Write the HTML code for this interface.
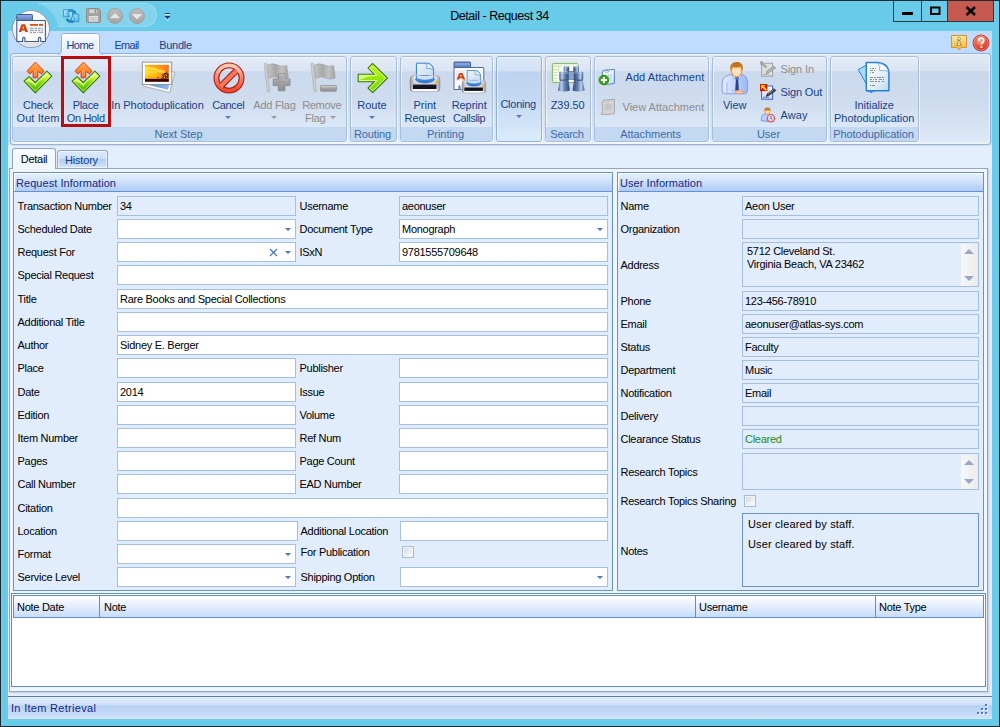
<!DOCTYPE html>
<html><head><meta charset="utf-8"><title>Detail - Request 34</title>
<style>
*{box-sizing:border-box;margin:0;padding:0}
html,body{width:1000px;height:727px;overflow:hidden}
body{background:#68cbe9;font-family:"Liberation Sans",sans-serif;font-size:11px;letter-spacing:-0.28px;color:#000;position:relative}
body div,body svg,body i{position:absolute}
#frame{left:0;top:0;width:1000px;height:727px;border-right:1px solid #1f2a30;border-left:1px solid #1f2a30;border-top:1px solid #1f2a30;border-bottom:1px solid #1f2a30}
#title{left:0;top:8px;width:999px;text-align:center;font-size:12.5px;line-height:16px;letter-spacing:-0.45px;color:#000}
#client{left:8px;top:31px;width:984px;height:688px;background:linear-gradient(#bfdbff,#bfdbff 114px,#e3eefc 114px)}
#capbtn{left:893px;top:1px;width:101px;height:21px;border:1px solid #2b3a42;border-top:none;background:#68cbe9}
#capbtn div{top:0;height:20px}
.rtab{top:34px;height:22px;line-height:23px;text-align:center;color:#15428b;font-size:11px}
.rtab.sel{line-height:21px;background:linear-gradient(#f4f8fe,#e3ecf8 60%,#dbe6f4);border:1px solid #8db2e3;border-bottom:none;border-radius:4px 4px 0 0;box-shadow:inset 1px 1px 0 #fff}
#rpanel{left:10px;top:53px;width:981px;height:92px;border:1px solid #8db2e3;border-bottom-color:#9cb2d0;border-radius:4px;background:linear-gradient(#e1e9f5,#d8e2f1 18.5%,#c8d7eb 19%,#ccdaee 50%,#dbe7f6 92%,#e4eefa);box-shadow:inset 0 0 0 1px #eef6fd,0 1px 0 #cfdcf0}
.grp{top:56px;height:86px;border:1px solid #a6bedc;border-radius:3px;background:linear-gradient(#e4ebf6,#dae4f2 17%,#cbd9ec 17.5%,#cfddef 55%,#dce8f7 83%);box-shadow:inset 1px 1px 0 rgba(255,255,255,.55), 1px 1px 0 rgba(255,255,255,.7)}
.grp .cap{left:0;right:0;bottom:0;height:14px;background:#c2d9f1;color:#3e6aaa;text-align:center;line-height:15px;font-size:11px;border-radius:0 0 2px 2px;white-space:nowrap;letter-spacing:-.04px;padding-right:2px}
.lb{color:#15428b;text-align:center;white-space:nowrap;line-height:13px;margin-top:1px}
.lb.dis{color:#8d8d8d}
.dd{width:0;height:0;border-left:3px solid transparent;border-right:3px solid transparent;border-top:3px solid #567db1}
.dd.dis{border-top-color:#9a9a9a}
/* page */
.ptab{text-align:center;white-space:nowrap}
#tabpage{left:9px;top:168px;width:979px;height:524px;border:1px solid #8fa6c8;background:#f1f6fe;box-shadow:1px 1px 0 #c8d4e8,2px 2px 0 #dbe4f2,3px 3px 0 #e4ecf8}
.panel{border:1px solid #6593cf;background:#e1ecfc}
.panel .ph{left:0;top:0;right:0;height:19px;line-height:20px;padding-left:2px;letter-spacing:.05px;color:#15288a;background:linear-gradient(#e6f0fe,#d2e3fb 45%,#bdd4f7 75%,#b0cbf4);border-bottom:1px solid #6593cf;box-shadow:inset 1px 1px 0 #fff}
.lbl{white-space:nowrap;color:#000;margin-left:-.5px}
.fld{border:1px solid #a3bfe3;background:#fff;line-height:18px;padding-left:2px;white-space:nowrap;overflow:hidden}
.fld.ro{background:#e1ecfc}
.cdd{right:4px;top:8px;width:0;height:0;border-left:3px solid transparent;border-right:3px solid transparent;border-top:3px solid #4d79b5}
.cx{right:17px;top:5px}
.chk{width:12px;height:12px;border:1px solid #a9bcd9;background:linear-gradient(135deg,#d2d5da,#f7f7f8 80%);box-shadow:inset 0 0 0 1px #f1f3f6}
.memo .mt{left:4px;top:2px;line-height:13px}
.sb{right:1px;top:1px;bottom:0;width:16px;background:linear-gradient(90deg,#f7f7f7,#ececec)}
.sb .up{left:3px;top:5px;border-left:5px solid transparent;border-right:5px solid transparent;border-bottom:5px solid #9aa7c6;width:0;height:0}
.sb .dn{left:3px;bottom:5px;border-left:5px solid transparent;border-right:5px solid transparent;border-top:5px solid #9aa7c6;width:0;height:0}
.notes{border-color:#6d94cf}
#grid{left:11px;top:593px;width:975px;height:94px;border:1px solid #5f8bd0;background:#fff}
#gridin{left:1px;top:1px;right:1px;height:23px;border:1px solid #5f8bd0;background:linear-gradient(#ffffff,#e6effd 45%,#c8dcfa)}
.gh{top:0;height:21px;line-height:22px;padding-left:3px;border-right:1px solid #5f8bd0}
#status{left:8px;top:696px;width:984px;height:23px;border-top:1px solid #567db1;background:linear-gradient(#e3eefc,#d0e0f8 35%,#b7d0f3 40%,#c6daf6 80%,#d9e7fa);color:#15288a;letter-spacing:.3px;line-height:23px;padding-left:3px}
</style></head><body>
<div id="frame"></div>
<div id="title">Detail - Request 34</div>
<div id="capbtn">
 <div style="left:27px;width:1px;background:#2b3a42"></div>
 <div style="left:53px;width:46px;background:#c75a50;border-left:1px solid #2b3a42"></div>
</div>
<div id="client"></div>
<div id="rpanel"></div>
<svg style="left:56px;top:31px" width="50" height="25" viewBox="0 0 50 25">
 <defs><linearGradient id="ht" x1="0" y1="0" x2="0" y2="1"><stop offset="0" stop-color="#ffffff"/><stop offset=".35" stop-color="#eef4fc"/><stop offset="1" stop-color="#e1eaf6"/></linearGradient></defs>
 <path d="M2 23.5 Q5.5 23 5.5 19 V5 Q5.5 2.5 8 2.5 H41 Q43.5 2.5 43.5 5 V19 Q43.5 23 47 23.5 V25 H2 Z" fill="url(#ht)"/>
 <path d="M2 23.5 Q5.5 23 5.5 19 V5 Q5.5 2.5 8 2.5 H41 Q43.5 2.5 43.5 5 V19 Q43.5 23 47 23.5" fill="none" stroke="#8db2e3" stroke-width="1"/>
 <path d="M6.5 20 V5.5 Q6.5 3.5 8.5 3.5 H40.5 Q42.5 3.5 42.5 5.5 V20" fill="none" stroke="#ffffff" stroke-width="1" opacity=".9"/>
</svg>
<div class="rtab" style="left:50px;width:60px;letter-spacing:-.59px">Home</div>
<div class="rtab" style="left:96.5px;width:60px;letter-spacing:-.66px">Email</div>
<div class="rtab" style="left:145.5px;width:60px;letter-spacing:-.3px">Bundle</div>
<div class="grp" style="left:12px;width:335px"><div class="cap">Next Step</div></div>
<div class="grp" style="left:350px;width:47px"><div class="cap" style="letter-spacing:-.1px">Routing</div></div>
<div class="grp" style="left:400px;width:93px"><div class="cap">Printing</div></div>
<div class="grp" style="left:496px;width:46px;border-color:#8fb1d4;background:linear-gradient(#dbe8f7,#d2e2f5 17%,#bdd3ef 17.5%,#c5daf3 55%,#d9ebfb 96%)"></div>
<div class="grp" style="left:545px;width:46px"><div class="cap" style="letter-spacing:-.26px">Search</div></div>
<div class="grp" style="left:594px;width:115px"><div class="cap">Attachments</div></div>
<div class="grp" style="left:712px;width:115px"><div class="cap">User</div></div>
<div class="grp" style="left:830px;width:89px"><div class="cap">Photoduplication</div></div>
<!--RIBBONITEMS-->
<div class="lb" style="left:-22.0px;top:98px;width:120px"><span style="letter-spacing:-0.28px">Check</span><br><span style="letter-spacing:0.1px">Out Item</span></div>
<div class="lb" style="left:25.700000000000003px;top:98px;width:120px"><span style="letter-spacing:-0.31px">Place</span><br><span style="letter-spacing:-0.34px">On Hold</span></div>
<div class="lb" style="left:97.5px;top:98px;width:120px"><span style="letter-spacing:-0.06px">In Photoduplication</span></div>
<div class="lb" style="left:168.3px;top:98px;width:120px"><span style="letter-spacing:-0.33px">Cancel</span></div>
<i class="dd" style="left:225px;top:116px"></i>
<div class="lb dis" style="left:214.5px;top:98px;width:120px"><span style="letter-spacing:-0.22px">Add Flag</span></div>
<i class="dd dis" style="left:271px;top:116px"></i>
<div class="lb dis" style="left:261.7px;top:98px;width:120px"><span style="letter-spacing:-0.33px">Remove</span></div>
<div class="lb dis" style="left:305px;top:111px;text-align:left"><span style="letter-spacing:-0.23px">Flag</span></div>
<i class="dd dis" style="left:329.5px;top:116px"></i>
<div class="lb" style="left:312.0px;top:98px;width:120px"><span style="letter-spacing:0.03px">Route</span></div>
<i class="dd" style="left:369px;top:116px"></i>
<div class="lb" style="left:364.8px;top:98px;width:120px"><span style="letter-spacing:0.03px">Print</span><br><span style="letter-spacing:-0.07px">Request</span></div>
<div class="lb" style="left:409.2px;top:98px;width:120px"><span style="letter-spacing:-0.07px">Reprint</span><br><span style="letter-spacing:-0.4px">Callslip</span></div>
<div class="lb" style="left:458.20000000000005px;top:97px;width:120px"><span style="letter-spacing:-0.26px">Cloning</span></div>
<i class="dd" style="left:515.5px;top:115px"></i>
<div class="lb" style="left:507.70000000000005px;top:98px;width:120px"><span style="letter-spacing:-0.04px">Z39.50</span></div>
<div class="lb" style="left:625.5px;top:70px;text-align:left"><span style="letter-spacing:0.08px">Add Attachment</span></div>
<div class="lb dis" style="left:622.5px;top:100px;text-align:left"><span style="letter-spacing:0.0px">View Attachment</span></div>
<div class="lb" style="left:674.7px;top:98px;width:120px"><span style="letter-spacing:-0.11px">View</span></div>
<div class="lb dis" style="left:780.5px;top:62px;text-align:left"><span style="letter-spacing:-0.11px">Sign In</span></div>
<div class="lb" style="left:780.5px;top:85px;text-align:left"><span style="letter-spacing:-0.15px">Sign Out</span></div>
<div class="lb" style="left:780.5px;top:108px;text-align:left"><span style="letter-spacing:0.07px">Away</span></div>
<div class="lb" style="left:814.2px;top:98px;width:120px"><span style="letter-spacing:-0.04px">Initialize</span><br><span style="letter-spacing:-0.07px">Photoduplication</span></div>
<div id="hl" style="left:61px;top:56px;width:50px;height:71px;border:3px solid #b70f0f"></div>
<!-- QAT background -->
<div style="left:38px;top:3px;width:119px;height:24px;border-radius:0 12px 12px 0;background:rgba(255,255,255,.19);border:1px solid rgba(255,255,255,.15);border-left:none"></div>
<div style="left:1px;top:1px;width:70px;height:30px;overflow:hidden"><div style="left:3.5px;top:1.5px;width:53px;height:53px;border-radius:50%;background:#68cbe9"></div></div>
<!-- orb -->
<svg style="left:11px;top:9px" width="40" height="40" viewBox="0 0 40 40">
 <defs>
  <radialGradient id="og" cx="50%" cy="35%" r="65%"><stop offset="0" stop-color="#ffffff"/><stop offset=".7" stop-color="#f1f3f7"/><stop offset="1" stop-color="#c9d0dc"/></radialGradient>
  <linearGradient id="tb" x1="0" y1="0" x2="0" y2="1"><stop offset="0" stop-color="#8fb0ea"/><stop offset="1" stop-color="#5f7fbd"/></linearGradient>
 </defs>
 <circle cx="20" cy="20" r="18.5" fill="url(#og)" stroke="#8b9ab3" stroke-width="1"/>
 <circle cx="20" cy="20" r="17.3" fill="none" stroke="#ffffff" stroke-opacity=".8" stroke-width="1"/>
 <path d="M5.8 11.5 V6.3 Q5.8 5.5 6.6 5.5 H20.6 Q21.4 5.5 21.4 6.3 V11.5 Z" fill="url(#tb)" stroke="#3d5a8c" stroke-width="1"/>
 <path d="M5.8 11.5 H33.6 Q34.4 11.5 34.4 12.3 V32.5 H29.8 V29.6 Q29.8 28.4 28.6 28.4 Q27.4 28.4 27.4 29.6 V32.5 H14 V29.6 Q14 28.4 12.8 28.4 Q11.6 28.4 11.6 29.6 V32.5 H5.8 Z" fill="#fdfdfe" stroke="#3d5a8c" stroke-width="1.1" stroke-linejoin="round"/>
 <rect x="7" y="13" width="26" height="12" fill="#f0f2f6" opacity=".8"/>
 <path d="M7.7 23 L10.6 15.2 H14 L17 23 H14.3 L13.8 21.4 H10.8 L10.3 23 Z M11.4 19.6 H13.2 L12.3 16.9 Z" fill="#d2460a"/>
 <rect x="19" y="15" width="8" height="1.8" fill="#dc5210"/><rect x="28" y="15" width="4" height="1.8" fill="#dc5210"/>
 <g fill="#9aa3b4"><rect x="19" y="18.8" width="3" height="1.2"/><rect x="23" y="18.8" width="3" height="1.2"/><rect x="27" y="18.8" width="3" height="1.2"/><rect x="31" y="18.8" width="1" height="1.2"/>
 <rect x="19" y="20.8" width="4" height="1.2"/><rect x="24" y="20.8" width="2" height="1.2"/><rect x="27" y="20.8" width="2" height="1.2"/><rect x="30" y="20.8" width="2" height="1.2"/>
 <rect x="19" y="22.8" width="2" height="1.2"/><rect x="22" y="22.8" width="3" height="1.2"/><rect x="26" y="22.8" width="1" height="1.2"/><rect x="28" y="22.8" width="4" height="1.2"/></g>
</svg>
<!-- refresh -->
<svg style="left:62px;top:7px" width="18" height="18" viewBox="0 0 18 18">
 <defs><linearGradient id="rf" x1="0" y1="0" x2="1" y2="1"><stop offset="0" stop-color="#c6f0fc"/><stop offset="1" stop-color="#4aaee6"/></linearGradient></defs>
 <path d="M5.2 4.6 A5.6 5.6 0 0 1 13.6 6.4" fill="none" stroke="#1a80b8" stroke-width="2.4"/>
 <path d="M12.8 13.6 A5.6 5.6 0 0 1 4.6 11.8" fill="none" stroke="#1a80b8" stroke-width="2.4"/>
 <path d="M8.4 2.6 Q12 3.4 10.2 8 Q8.4 12 9.4 15.6" fill="none" stroke="#2a94d0" stroke-width="1.6"/>
 <path d="M1.4 2.8 H7.4 L5.6 5.4 L7.6 9.8 H1.4 Z" fill="url(#rf)" stroke="#2a94d0" stroke-width=".9" stroke-linejoin="round"/>
 <path d="M16.8 14.6 H11.2 L12.8 12 L10.6 7.2 H16.8 Z" fill="url(#rf)" stroke="#2a94d0" stroke-width=".9" stroke-linejoin="round"/>
 <path d="M9 5 Q9.8 8 8.8 11.4" fill="none" stroke="#d8f4ff" stroke-width=".8"/>
</svg>
<!-- save -->
<svg style="left:86px;top:8px" width="15" height="15" viewBox="0 0 15 15">
 <path d="M.5 1.5 Q.5 .5 1.5 .5 H12.5 L14.5 2.5 V13.5 Q14.5 14.5 13.5 14.5 H1.5 Q.5 14.5 .5 13.5 Z" fill="#a6a6a6" stroke="#8a8a8a"/>
 <rect x="3" y="1" width="8.5" height="4.5" fill="#d8d8d8" stroke="#909090" stroke-width=".6"/>
 <rect x="8.6" y="1.6" width="1.6" height="3" fill="#8c8c8c"/>
 <rect x="2.6" y="7.6" width="9.8" height="6.4" fill="#e2e2e2" stroke="#909090" stroke-width=".6"/>
 <path d="M4 9.8 H11 M4 11.8 H11" stroke="#b4b4b4" stroke-width=".9"/>
</svg>
<!-- up / down -->
<svg style="left:107px;top:8px" width="16" height="16" viewBox="0 0 16 16">
 <defs><linearGradient id="gc" x1="0" y1="0" x2="0" y2="1"><stop offset="0" stop-color="#bdbdbd"/><stop offset="1" stop-color="#a4a4a4"/></linearGradient></defs>
 <circle cx="8" cy="8" r="7.5" fill="url(#gc)" stroke="#9c9c9c" stroke-width=".8"/>
 <path d="M3.6 9.8 L8 5.4 L12.4 9.8 Z" fill="#e6e6e6" stroke="#f4f4f4" stroke-width=".6" stroke-linejoin="round"/>
</svg>
<svg style="left:129px;top:8px" width="16" height="16" viewBox="0 0 16 16">
 <circle cx="8" cy="8" r="7.5" fill="url(#gc)" stroke="#9c9c9c" stroke-width=".8"/>
 <path d="M3.6 6.6 L8 11 L12.4 6.6 Z" fill="#e6e6e6" stroke="#f4f4f4" stroke-width=".6" stroke-linejoin="round"/>
</svg>
<!-- customize -->
<svg style="left:164px;top:12px" width="8" height="9" viewBox="0 0 8 9">
 <rect x="1" y="1" width="5" height="1" fill="#1c2f7a"/><rect x="1" y="2" width="5" height="1" fill="#f3fbff"/>
 <path d="M.5 4 H6.5 L3.5 7 Z" fill="#1c2f7a"/><path d="M1.5 6.5 L3.5 8.3 L5.5 6.5" fill="none" stroke="#f3fbff" stroke-width=".8"/>
</svg>
<!-- caption glyphs -->
<svg style="left:902px;top:11px" width="12" height="5" viewBox="0 0 12 5"><rect x="0" y="1" width="11" height="3" fill="#000"/></svg>
<svg style="left:930px;top:6px" width="11" height="10" viewBox="0 0 11 10"><rect x="1" y="1.5" width="8.5" height="6.5" fill="none" stroke="#000" stroke-width="2"/></svg>
<svg style="left:965px;top:6px" width="12" height="10" viewBox="0 0 12 10"><path d="M1.5 1 L10 9 M10 1 L1.5 9" stroke="#000" stroke-width="2.6"/></svg>
<!-- info + help -->
<svg style="left:950px;top:34px" width="18" height="18" viewBox="0 0 18 18">
 <defs><linearGradient id="yi" x1="0" y1="0" x2="0" y2="1"><stop offset="0" stop-color="#fde9a2"/><stop offset="1" stop-color="#f2b234"/></linearGradient></defs>
 <path d="M1.5 1.5 H16.5 V13.5 H11 L9 15.8 L7 13.5 H1.5 Z" fill="url(#yi)" stroke="#d8922a" stroke-width="1"/>
 <path d="M9 3.2 a1.4 1.4 0 1 1 -.01 0 M8 6.5 H10 V10 H11 V11.6 H7 V10 H8 Z" fill="#fffdf0" stroke="#a8701c" stroke-width=".8"/>
</svg>
<svg style="left:972px;top:34px" width="18" height="18" viewBox="0 0 18 18">
 <defs><radialGradient id="rh" cx="45%" cy="35%" r="65%"><stop offset="0" stop-color="#f9b29a"/><stop offset=".55" stop-color="#e7563a"/><stop offset="1" stop-color="#c9281a"/></radialGradient></defs>
 <circle cx="9" cy="9" r="8" fill="url(#rh)" stroke="#c23a2c" stroke-width=".9"/><circle cx="9" cy="9" r="7" fill="none" stroke="#f6b4a4" stroke-width=".7" opacity=".8"/>
 <path d="M6.6 6.8 Q6.6 4.2 9.2 4.2 Q11.8 4.2 11.8 6.5 Q11.8 7.8 10.4 8.7 Q9.5 9.3 9.5 10.6" fill="none" stroke="#fff" stroke-width="1.7"/>
 <circle cx="9.4" cy="13" r="1.1" fill="#fff"/>
</svg>
<svg width="0" height="0" style="left:0;top:0"><defs>
 <linearGradient id="or" x1="0" y1="0" x2="0" y2="1"><stop offset="0" stop-color="#ffb45c"/><stop offset=".5" stop-color="#ff8a30"/><stop offset="1" stop-color="#f4500c"/></linearGradient>
 <linearGradient id="gr" x1="0" y1="0" x2="0" y2="1"><stop offset="0" stop-color="#f4ffb0"/><stop offset=".35" stop-color="#b8f01c"/><stop offset=".55" stop-color="#7cd60c"/><stop offset="1" stop-color="#3eae08"/></linearGradient>
 <linearGradient id="ga" x1="0" y1="0" x2="0" y2="1"><stop offset="0" stop-color="#c4ff10"/><stop offset="1" stop-color="#70d008"/></linearGradient>
 <linearGradient id="sun" x1="0" y1="0" x2="1" y2="0"><stop offset="0" stop-color="#ffe326"/><stop offset=".5" stop-color="#ffb01c"/><stop offset="1" stop-color="#ff5a22"/></linearGradient>
 <linearGradient id="sun2" x1="0" y1="0" x2="0" y2="1"><stop offset="0" stop-color="#ff7a10" stop-opacity=".55"/><stop offset=".45" stop-color="#ffd000" stop-opacity="0"/><stop offset="1" stop-color="#ff5a00" stop-opacity=".8"/></linearGradient>
 <linearGradient id="rd" x1="0" y1="0" x2="0" y2="1"><stop offset="0" stop-color="#ffc4ac"/><stop offset=".5" stop-color="#f88466"/><stop offset="1" stop-color="#ee4a2c"/></linearGradient>
 <linearGradient id="fl" x1="0" y1="0" x2="1" y2="0"><stop offset="0" stop-color="#c6c6c6"/><stop offset=".4" stop-color="#a8a8a8"/><stop offset=".7" stop-color="#c2c2c2"/><stop offset="1" stop-color="#a2a2a2"/></linearGradient>
 <linearGradient id="pl" x1="0" y1="0" x2="0" y2="1"><stop offset="0" stop-color="#b4b4b4"/><stop offset="1" stop-color="#8e8e8e"/></linearGradient>
 <linearGradient id="pb" x1="0" y1="0" x2="0" y2="1"><stop offset="0" stop-color="#fbfbfc"/><stop offset=".5" stop-color="#d4d5d8"/><stop offset="1" stop-color="#f2f2f4"/></linearGradient>
 <linearGradient id="pbh" x1="0" y1="0" x2="1" y2="0"><stop offset="0" stop-color="#6e7076" stop-opacity=".75"/><stop offset=".16" stop-color="#c8c8cc" stop-opacity=".3"/><stop offset=".4" stop-color="#fff" stop-opacity="0"/><stop offset=".8" stop-color="#d0d0d4" stop-opacity=".25"/><stop offset="1" stop-color="#7c7e84" stop-opacity=".7"/></linearGradient>
 <linearGradient id="pg" x1="0" y1="0" x2="1" y2="1"><stop offset="0" stop-color="#eef4fb"/><stop offset="1" stop-color="#c6d9ef"/></linearGradient>
 <linearGradient id="tr" x1="0" y1="0" x2="0" y2="1"><stop offset="0" stop-color="#7ab8f4"/><stop offset="1" stop-color="#1f6fd0"/></linearGradient>
 <linearGradient id="bn" x1="0" y1="0" x2="1" y2="0"><stop offset="0" stop-color="#3a5482"/><stop offset=".28" stop-color="#bcd0ec"/><stop offset=".55" stop-color="#6684b4"/><stop offset="1" stop-color="#2e4876"/></linearGradient>
 <linearGradient id="sh" x1="0" y1="0" x2="1" y2="0"><stop offset="0" stop-color="#e4ecff"/><stop offset=".5" stop-color="#c4d5fc"/><stop offset="1" stop-color="#98b4f4"/></linearGradient>
 <linearGradient id="hr" x1="0" y1="0" x2="0" y2="1"><stop offset="0" stop-color="#b86a14"/><stop offset="1" stop-color="#d99030"/></linearGradient>
 <linearGradient id="dc" x1="0" y1="0" x2="1" y2="1"><stop offset="0" stop-color="#ffffff"/><stop offset=".6" stop-color="#e2eef8"/><stop offset="1" stop-color="#bcd8ee"/></linearGradient>
</defs></svg>
<!-- check out item -->
<svg style="left:18px;top:58px" width="40" height="40" viewBox="0 0 40 40"><g id="chk">
 <path d="M17.5 4.1 L25.9 12.9 L23.4 16 L19.8 13.2 V19.8 H15.1 V13.2 L11.8 16 L9.1 12.9 Z" fill="url(#or)" stroke="#e8440a" stroke-width="1" stroke-linejoin="round"/>
 <path d="M16.6 12 V18.6 M18.3 12 V18.6" stroke="#ffc890" stroke-width=".7" opacity=".8"/>
 <path d="M6 23.1 L11 18.7 L17.3 24.5 L28.9 13.2 L33.8 18.2 L17.3 34.9 Z" fill="url(#gr)" stroke="#3d7c12" stroke-width="1.1" stroke-linejoin="round"/>
 <path d="M7.8 23.1 L11 20.4 L17.3 26.2 L28.9 15 L32 18.2 L17.3 33.1 Z" fill="none" stroke="#eaffa0" stroke-width=".8" opacity=".85"/>
 <path d="M8.2 22.8 L11 20.4 L17.3 26.2 L28.9 15 L31.6 17.6 Q23 19.6 17.3 28.2 Q13.4 24.4 8.2 22.8 Z" fill="#f8ffa4" opacity=".7"/>
</g></svg>
<svg style="left:66px;top:58px" width="40" height="40" viewBox="0 0 40 40"><g>
 <path d="M17.5 4.1 L25.9 12.9 L23.4 16 L19.8 13.2 V19.8 H15.1 V13.2 L11.8 16 L9.1 12.9 Z" fill="url(#or)" stroke="#e8440a" stroke-width="1" stroke-linejoin="round"/>
 <path d="M16.6 12 V18.6 M18.3 12 V18.6" stroke="#ffc890" stroke-width=".7" opacity=".8"/>
 <path d="M6 23.1 L11 18.7 L17.3 24.5 L28.9 13.2 L33.8 18.2 L17.3 34.9 Z" fill="url(#gr)" stroke="#3d7c12" stroke-width="1.1" stroke-linejoin="round"/>
 <path d="M7.8 23.1 L11 20.4 L17.3 26.2 L28.9 15 L32 18.2 L17.3 33.1 Z" fill="none" stroke="#eaffa0" stroke-width=".8" opacity=".85"/>
 <path d="M8.2 22.8 L11 20.4 L17.3 26.2 L28.9 15 L31.6 17.6 Q23 19.6 17.3 28.2 Q13.4 24.4 8.2 22.8 Z" fill="#f8ffa4" opacity=".7"/>
</g></svg>
<!-- photo -->
<svg style="left:138px;top:58px" width="40" height="40" viewBox="0 0 40 40">
 <defs><linearGradient id="bsk" x1="0" y1="0" x2="1" y2="0"><stop offset="0" stop-color="#4f86d6"/><stop offset="1" stop-color="#8db8ee"/></linearGradient></defs>
 <g transform="rotate(14 20 22)"><rect x="6.5" y="10.5" width="28" height="21" fill="#f7f7f7" stroke="#a4a4a4" stroke-width=".8"/><rect x="9" y="13" width="23" height="16" fill="url(#bsk)"/></g>
 <rect x="4.3" y="4.1" width="29.4" height="22.3" fill="#fbfbfb" stroke="#8e8e8e" stroke-width=".9"/>
 <rect x="7" y="6.9" width="23.8" height="16.8" fill="url(#sun)"/>
 <rect x="7" y="6.9" width="23.8" height="16.8" fill="url(#sun2)"/>
 <path d="M7 10.5 Q12 9 17 11.5 T27 13.5" stroke="#fff45a" stroke-width="2.6" fill="none" opacity=".6"/>
 <path d="M7 14.5 Q13 13 19 15" stroke="#ffe83a" stroke-width="2" fill="none" opacity=".5"/>
 <g fill="#4a1c02"><circle cx="25" cy="17.6" r="1"/><circle cx="26.6" cy="16" r="1.1"/><circle cx="28.4" cy="15.4" r="1"/><circle cx="29.8" cy="16.8" r="1.1"/><circle cx="27.4" cy="18" r="1"/><circle cx="29.4" cy="19" r="1.2"/><circle cx="25.4" cy="19.8" r="1"/><circle cx="27.6" cy="20" r="1"/><circle cx="24" cy="20.4" r=".8"/><circle cx="20" cy="19.6" r=".7"/></g>
 <g fill="#ffd21c"><circle cx="26" cy="17" r=".5"/><circle cx="28.6" cy="17.6" r=".5"/><circle cx="26.6" cy="19.2" r=".5"/><circle cx="28.6" cy="19.6" r=".45"/><circle cx="24.4" cy="20.2" r=".4"/></g>
 <rect x="7" y="20.9" width="23.8" height="2.8" fill="#2c0208"/>
</svg>
<!-- cancel -->
<svg style="left:208px;top:58px" width="40" height="40" viewBox="0 0 40 40">
 <circle cx="21" cy="20" r="12.6" fill="none" stroke="#b01c16" stroke-width="5.8"/>
 <path d="M29.9 11.1 L12.1 28.9" stroke="#b01c16" stroke-width="6.4"/>
 <circle cx="21" cy="20" r="12.6" fill="none" stroke="url(#rd)" stroke-width="3.6"/>
 <path d="M29.6 11.4 L12.4 28.6" stroke="#f4775a" stroke-width="4.2"/>
 <path d="M10.4 15 A11.6 11.6 0 0 1 31.6 15" fill="none" stroke="#ffd2c0" stroke-width="1.4" opacity=".8"/>
</svg>
<!-- add flag / remove flag -->
<svg style="left:256px;top:58px" width="90" height="40" viewBox="0 0 90 40">
 <g id="flg"><path d="M8.1 5.6 L10.4 5.2 L13.8 33.5 L11.4 33.9 Z" fill="#cfcfcf" stroke="#a9a9a9" stroke-width=".6"/>
 <path d="M11.3 7.2 Q16 4.4 21 6.8 Q26 9.6 30.8 7.4 L32.4 20 Q27.5 22.4 22.6 19.8 Q18 17.4 13 20.2 Z" fill="url(#fl)" stroke="#a0a0a0" stroke-width=".6"/></g>
 <path d="M22.3 15.8 H28.9 V21 H34 V27.6 H28.9 V32.8 H22.3 V27.6 H17.2 V21 H22.3 Z" fill="url(#pl)" stroke="#868686" stroke-width=".8" stroke-linejoin="round"/>
 <path d="M23.1 16.6 H28.1 V21.8 H33.2" fill="none" stroke="#c8c8c8" stroke-width=".7"/>
 <g transform="translate(46.8,0)"><path d="M8.1 5.6 L10.4 5.2 L13.8 33.5 L11.4 33.9 Z" fill="#cfcfcf" stroke="#a9a9a9" stroke-width=".6"/>
 <path d="M11.3 7.2 Q16 4.4 21 6.8 Q26 9.6 30.8 7.4 L32.4 20 Q27.5 22.4 22.6 19.8 Q18 17.4 13 20.2 Z" fill="url(#fl)" stroke="#a0a0a0" stroke-width=".6"/></g>
 <rect x="64.4" y="27.5" width="16.1" height="5.8" rx=".8" fill="url(#pl)" stroke="#909090" stroke-width=".7"/>
 <rect x="65" y="28.1" width="14.9" height="1.2" fill="#cacaca"/>
</svg>
<!-- route -->
<svg style="left:352px;top:58px" width="40" height="40" viewBox="0 0 40 40">
 <path d="M6.2 16.2 H22.3 L16 10.2 L20.6 5.5 L35.5 20.1 L20.6 34.7 L16 30 L22.3 23.7 H6.2 Z" fill="url(#ga)" stroke="#3d7a14" stroke-width="1.1" stroke-linejoin="round"/>
 <path d="M7.4 17.4 H25 L17.7 10.2 L20.6 7.2 L33.8 20.1 L20.6 33 L17.7 30 L25 22.5 H7.4 Z" fill="none" stroke="#f0ffc4" stroke-width=".9" opacity=".9"/>
 <path d="M8.2 18.2 H20 Q14 18.6 8.2 21.4 Z" fill="#f4ffd0" opacity=".8"/>
</svg>
<!-- printers -->
<svg style="left:404px;top:58px" width="90" height="40" viewBox="0 0 90 40">
 <g id="prn">
  <path d="M12.4 18.5 V5.2 H23.6 Q29.5 6.5 29.6 12.5 V18.5 Z" fill="url(#pg)" stroke="#2f7fd6" stroke-width="1"/>
  <path d="M21.8 5.4 Q23.6 7.6 22.6 10.4 Q26.4 9.6 29.4 12.2" fill="#f6fafe" stroke="#4a94e0" stroke-width=".8"/>
  <path d="M6 21.5 Q6 17.8 10 17.6 H32 Q36 17.8 36 21.5 V30.4 Q36 33.7 32.6 33.7 H9.4 Q6 33.7 6 30.4 Z" fill="url(#pb)" stroke="#a9abb1" stroke-width=".8"/>
  <path d="M6 21.5 Q6 17.8 10 17.6 H32 Q36 17.8 36 21.5 V30.4 Q36 33.7 32.6 33.7 H9.4 Q6 33.7 6 30.4 Z" fill="url(#pbh)"/>
  <ellipse cx="21" cy="21.3" rx="9.3" ry="3.6" fill="url(#tr)" stroke="#2469c4" stroke-width=".7"/>
  <path d="M12.4 18 H29.6 V20.6 Q21 24 12.4 20.6 Z" fill="#d8e6f6" opacity=".92"/>
  <path d="M12.4 18 V20.6 Q21 24 29.6 20.6 V18" fill="none" stroke="#2f7fd6" stroke-width=".9"/>
  <rect x="9" y="27" width="23.4" height="4" fill="#12121e"/>
  <rect x="9" y="26.2" width="23.4" height=".9" fill="#6a6c78"/>
  <rect x="8" y="31.2" width="25.4" height="1.6" rx=".8" fill="#fafafa"/>
  <circle cx="32.6" cy="24.3" r="1.3" fill="#ffc61a" stroke="#f08a10" stroke-width=".4"/>
 </g>
 <!-- card -->
 <path d="M50 9.5 V4.8 Q50 4 50.8 4 H65.8 Q66.6 4 66.6 4.8 V9.5 Z" fill="#6686c2" stroke="#3d5a8c" stroke-width=".9"/>
 <rect x="51" y="5" width="14.6" height="2" fill="#86a4dc"/>
 <path d="M50 9.5 H79 Q79.8 9.5 79.8 10.3 V31.5 H56 V28.6 Q56 27.6 55 27.6 V31.5 H50 Z" fill="#fcfcfd" stroke="#3d5a8c" stroke-width=".9" stroke-linejoin="round"/>
 <rect x="51.5" y="12" width="10" height="11" fill="#eceef2"/>
 <path d="M52.6 21.6 L55.4 14.9 H58.4 L61.3 21.6 H58.8 L58.4 20.2 H55.5 L55.1 21.6 Z M56 18.6 H57.8 L56.9 16.2 Z" fill="#cf420a"/>
 <g transform="translate(53.3,8.4) scale(.79)"><g>
  <path d="M12.4 18.5 V5.2 H23.6 Q29.5 6.5 29.6 12.5 V18.5 Z" fill="url(#pg)" stroke="#2f7fd6" stroke-width="1"/>
  <path d="M21.8 5.4 Q23.6 7.6 22.6 10.4 Q26.4 9.6 29.4 12.2" fill="#f6fafe" stroke="#4a94e0" stroke-width=".8"/>
  <path d="M6 21.5 Q6 17.8 10 17.6 H32 Q36 17.8 36 21.5 V30.4 Q36 33.7 32.6 33.7 H9.4 Q6 33.7 6 30.4 Z" fill="url(#pb)" stroke="#a9abb1" stroke-width=".8"/>
  <path d="M6 21.5 Q6 17.8 10 17.6 H32 Q36 17.8 36 21.5 V30.4 Q36 33.7 32.6 33.7 H9.4 Q6 33.7 6 30.4 Z" fill="url(#pbh)"/>
  <ellipse cx="21" cy="21.3" rx="9.3" ry="3.6" fill="url(#tr)" stroke="#2469c4" stroke-width=".7"/>
  <path d="M12.4 18 H29.6 V20.6 Q21 24 12.4 20.6 Z" fill="#d8e6f6" opacity=".92"/>
  <path d="M12.4 18 V20.6 Q21 24 29.6 20.6 V18" fill="none" stroke="#2f7fd6" stroke-width=".9"/>
  <rect x="9" y="27" width="23.4" height="4" fill="#12121e"/>
  <rect x="9" y="26.2" width="23.4" height=".9" fill="#6a6c78"/>
  <rect x="8" y="31.2" width="25.4" height="1.6" rx=".8" fill="#fafafa"/>
  <circle cx="32.6" cy="24.3" r="1.3" fill="#ffc61a" stroke="#f08a10" stroke-width=".4"/>
 </g></g>
</svg>
<!-- binoculars -->
<svg style="left:548px;top:58px" width="40" height="40" viewBox="0 0 40 40">
 <rect x="4.4" y="5.4" width="25.6" height="19.2" rx="1.2" fill="#fafdf6" stroke="#7fb95a" stroke-width="1"/>
 <path d="M5 8.3 H13.5 M10.6 8.3 V14 M5 11.5 H10 M5 14.4 H10 M5 17.4 H9.4 M5 20.4 H9 M5 23 H9" stroke="#b8dc9c" stroke-width=".8" fill="none"/>
 <rect x="5" y="6" width="24.4" height="1.6" fill="#e4f2d8"/>
 <rect x="20.4" y="13.2" width="5.8" height="8.4" fill="#8ba2cc" stroke="#4a6496" stroke-width=".5"/>
 <g id="brl"><path d="M15.7 8.6 Q18.4 7.6 21.2 8.6 V13.8 H15.7 Z" fill="url(#bn)"/>
 <ellipse cx="18.45" cy="8.7" rx="2.75" ry=".8" fill="#b4c8e8"/>
 <rect x="11.3" y="13.8" width="9.4" height="8.2" rx=".8" fill="url(#bn)"/>
 <rect x="11.3" y="14.4" width="9.4" height="1.2" fill="#c4d6f0" opacity=".5"/>
 <path d="M11.9 22.4 H20.5 L22 32.6 Q16 34.6 9.9 32.6 Z" fill="url(#bn)"/>
 <path d="M11.6 22.2 H20.7" stroke="#22365c" stroke-width=".9"/></g>
 <g transform="translate(46.5,0) scale(-1,1)"><g><path d="M15.7 8.6 Q18.4 7.6 21.2 8.6 V13.8 H15.7 Z" fill="url(#bn)"/>
 <ellipse cx="18.45" cy="8.7" rx="2.75" ry=".8" fill="#b4c8e8"/>
 <rect x="11.3" y="13.8" width="9.4" height="8.2" rx=".8" fill="url(#bn)"/>
 <rect x="11.3" y="14.4" width="9.4" height="1.2" fill="#c4d6f0" opacity=".5"/>
 <path d="M11.9 22.4 H20.5 L22 32.6 Q16 34.6 9.9 32.6 Z" fill="url(#bn)"/>
 <path d="M11.6 22.2 H20.7" stroke="#22365c" stroke-width=".9"/></g></g>
</svg>
<!-- attachments -->
<svg style="left:594px;top:62px" width="40" height="60" viewBox="0 0 40 60">
 <path d="M8.4 9.6 Q8.6 8.2 10.4 8.2 L20.4 7.4 V21.4 Q16 22.6 10 22.2 L8.4 21.4 Z" fill="url(#dc)" stroke="#4a7ab8" stroke-width=".9"/>
 <ellipse cx="12.6" cy="9.3" rx="2.4" ry=".9" fill="#fff" stroke="#4a7ab8" stroke-width=".6"/>
 <path d="M14 13 H18 M14.5 15 H17.5 M14 17 H17" stroke="#7f9cc8" stroke-width=".8" stroke-dasharray="1 .8"/>
 <circle cx="9.9" cy="18" r="4.9" fill="#3aa416" stroke="#2a8610" stroke-width=".7"/>
 <path d="M9.9 15 V21 M6.9 18 H12.9" stroke="#fff" stroke-width="2"/>
 <path d="M8.4 39.6 Q8.6 38.2 10.4 38.2 L20.4 37.4 V51.6 Q14 52.8 7.4 52.4 Q6.2 51.4 8.4 50.6 Z" fill="#d4d4d4" stroke="#a4a4a4" stroke-width=".9"/>
 <ellipse cx="12.6" cy="39.3" rx="2.4" ry=".9" fill="#ececec" stroke="#a4a4a4" stroke-width=".6"/>
 <path d="M11 43 H18 M11 45 H18 M11 47 H18" stroke="#a8a8a8" stroke-width=".9" stroke-dasharray="1.4 .8"/>
</svg>
<!-- user view -->
<svg style="left:714px;top:58px" width="40" height="40" viewBox="0 0 40 40">
 <path d="M8.2 33 Q7.4 22 10.5 19 Q14 16.4 19 16.2 H26 Q31 16.6 32.6 20 Q34.6 25 33.4 33 Q33 35.8 31 35.8 H10.6 Q8.4 35.8 8.2 33 Z" fill="url(#sh)" stroke="#7a98e8" stroke-width=".9"/>
 <path d="M12.8 24 Q13.4 30 12.8 35.4 M17.6 32.4 H21" stroke="#8aa6ec" stroke-width=".7" fill="none"/>
 <path d="M18 16.6 L20.4 21.6 L22.6 19 L25.2 21.8 L27.6 16.8 Z" fill="#d8e4ff" stroke="#88a4ec" stroke-width=".6"/>
 <path d="M21.2 19.4 H24.8 L24.2 21.4 L24.9 32.4 H21.2 L21.9 21.4 Z" fill="#2a4480"/>
 <path d="M21.2 19.3 H24.9 L24.3 21.5 H21.8 Z" fill="#4a78e0"/>
 <ellipse cx="22.6" cy="12.9" rx="5.2" ry="5.9" fill="#ffe2b2" stroke="#e87a30" stroke-width=".9"/>
 <path d="M16.6 13.6 Q14.6 7 19.6 4.6 Q24 3 27.2 5.4 Q30 8 28.4 13.4 Q27.8 10 26.4 8.8 Q22 10.4 18.4 9 Q17 10.6 16.6 13.6 Z" fill="url(#hr)"/>
 <path d="M21 33.6 Q25.4 31.6 29.8 33.6 Q29.8 35.6 25.4 35.6 Q21 35.6 21 33.6 Z" fill="#ffd2a4" stroke="#ee8a4a" stroke-width=".7"/>
</svg>
<!-- sign in / sign out / away -->
<svg style="left:754px;top:58px" width="40" height="70" viewBox="0 0 40 70">
 <rect x="7.6" y="5.2" width="11" height="13" fill="#dedede" stroke="#9a9a9a" stroke-width=".9"/>
 <path d="M6 3.4 L9 3 L8.6 4.6 L13.2 8.8 L11.6 10.4 L7.2 6 L6 7 Z" fill="#a4a4a4"/>
 <path d="M12 15.6 L13.4 12.6 L20 8.2 L21.8 10 L15 14.6 Z" fill="#b4b4b4" stroke="#8a8a8a" stroke-width=".6"/>
 <path d="M9 16.4 H15" stroke="#a0a0a0" stroke-width=".8"/>
 <defs><linearGradient id="sd" x1="0" y1="0" x2="0" y2="1"><stop offset="0" stop-color="#fff"/><stop offset="1" stop-color="#c8daf8"/></linearGradient></defs>
 <rect x="7.6" y="28" width="11" height="13.2" fill="url(#sd)" stroke="#3a62c8" stroke-width="1"/>
 <rect x="6" y="26" width="7.4" height="7.2" fill="#d01c00"/>
 <path d="M7 27 H11.4 L10 28.4 L13 31.4 L11.6 32.8 L8.6 29.8 L7 31.4 Z" fill="#ffd21e"/>
 <path d="M12 38.6 L13.4 35.6 L20 30.6 L21.9 32.6 L15 37.6 Z" fill="#3a3a3a" stroke="#1c1c1c" stroke-width=".5"/>
 <path d="M14.2 35.8 L19.6 31.6" stroke="#d8d8d8" stroke-width=".7"/>
 <path d="M9 39.4 H15" stroke="#5a6a8a" stroke-width=".8"/>
 <path d="M7.4 63 Q7 57 10 56 H15 Q17.6 56.4 17.6 63.4 Z" fill="#bcd0fa" stroke="#6a8ae0" stroke-width=".8"/>
 <ellipse cx="13.4" cy="53.4" rx="2.7" ry="3" fill="#ffd8a4" stroke="#e0843a" stroke-width=".6"/>
 <path d="M10.4 53 Q10 49.4 13.6 49.4 Q17 49.6 16.4 53 Q15 51.4 10.4 53 Z" fill="#c07a20"/>
 <circle cx="16.9" cy="60.2" r="3.7" fill="#d4d4fa" stroke="#e0503e" stroke-width="1.2"/>
 <path d="M16.9 58 V60.4 L18.2 61" stroke="#555" stroke-width=".7" fill="none"/>
 <path d="M14.2 64 L15 62.8 M19.6 64 L18.8 62.8" stroke="#e0503e" stroke-width=".8"/>
</svg>
<!-- initialize photoduplication -->
<svg style="left:854px;top:58px" width="40" height="40" viewBox="0 0 40 40">
 <path d="M4.2 11.5 L13 6.8 L17.4 34.8 L12.4 26 Z" fill="#a6dcff" stroke="#2a86d8" stroke-width="1"/>
 <path d="M12.2 33 H21 L17.2 35 Z" fill="#3a98e6"/>
 <path d="M12.3 4.6 H23.8 Q33.6 5.4 34.9 13.4 V32.8 H12.3 Z" fill="url(#dc)" stroke="#2a80d2" stroke-width="1.5" stroke-linejoin="round"/>
 <path d="M23.4 5 Q26.8 8 25.6 12.6 Q30.6 11.6 34.4 13.6 Q33 6.4 23.4 5 Z" fill="#fafdff" stroke="#5aa2e4" stroke-width=".7"/>
 <g stroke="#8c8c8c" stroke-width="1">
 <path d="M16 10.5 H17 M18 10.5 H20 M21 10.5 H22 M16 12.5 H19 M20 12.5 H21 M16 14.6 H17 M18 14.6 H20"/>
 <path d="M16 19.5 H19 M20 19.5 H22 M23 19.5 H27 M28 19.5 H30 M16 21.5 H18 M19 21.5 H20 M21 21.5 H23 M25 21.5 H28 M29 21.5 H30 M16 23.5 H20 M21 23.5 H23 M24 23.5 H26 M28 23.5 H30"/>
 <path d="M16 27.5 H17 M18 27.5 H21"/></g>
</svg>

<div id="tabpage"></div>
<div class="ptab" style="left:12px;top:148px;width:44px;height:21px;line-height:21px;border:1px solid #8fa6c8;border-bottom:none;border-radius:3px 3px 0 0;background:linear-gradient(#f7fafe,#f1f6fe)">Detail</div>
<div class="ptab" style="left:57px;top:150px;width:51px;height:18px;line-height:18px;color:#15428b;padding-right:2px;letter-spacing:-.2px;border:1px solid #8fa6c8;border-bottom:none;border-radius:3px 3px 0 0;background:linear-gradient(#deeafb,#cddff8 45%,#b4cef1 50%,#c3d9f6 75%,#d5e5fa);box-shadow:inset 0 0 0 1px rgba(255,255,255,.6)">History</div>
<div class="panel" style="left:13px;top:172px;width:600px;height:419px"><div class="ph">Request Information</div></div>
<div class="panel" style="left:617px;top:172px;width:367px;height:419px"><div class="ph">User Information</div></div>
<div class="lbl" style="left:18px;top:196px;height:20px;line-height:20px">Transaction Number</div>
<div class="fld ro" style="left:117px;top:196px;width:179px;height:20px">34</div>
<div class="lbl" style="left:300px;top:196px;height:20px;line-height:20px">Username</div>
<div class="fld ro" style="left:399px;top:196px;width:209px;height:20px">aeonuser</div>
<div class="lbl" style="left:18px;top:219px;height:20px;line-height:20px">Scheduled Date</div>
<div class="fld" style="left:117px;top:219px;width:179px;height:20px"><i class="cdd"></i></div>
<div class="lbl" style="left:300px;top:219px;height:20px;line-height:20px">Document Type</div>
<div class="fld" style="left:399px;top:219px;width:209px;height:20px">Monograph<i class="cdd"></i></div>
<div class="lbl" style="left:18px;top:242px;height:20px;line-height:20px">Request For</div>
<div class="fld" style="left:117px;top:242px;width:179px;height:20px"><i class="cdd"></i><svg class="cx" width="9" height="9" viewBox="0 0 9 9"><path d="M1 1 L8 8 M8 1 L1 8" stroke="#4d79b5" stroke-width="1.3" fill="none"/></svg></div>
<div class="lbl" style="left:300px;top:242px;height:20px;line-height:20px">ISxN</div>
<div class="fld " style="left:399px;top:242px;width:209px;height:20px">9781555709648</div>
<div class="lbl" style="left:18px;top:265px;height:20px;line-height:20px">Special Request</div>
<div class="fld " style="left:117px;top:265px;width:491px;height:20px"></div>
<div class="lbl" style="left:18px;top:289px;height:20px;line-height:20px">Title</div>
<div class="fld " style="left:117px;top:289px;width:491px;height:20px">Rare Books and Special Collections</div>
<div class="lbl" style="left:18px;top:312px;height:20px;line-height:20px">Additional Title</div>
<div class="fld " style="left:117px;top:312px;width:491px;height:20px"></div>
<div class="lbl" style="left:18px;top:335px;height:20px;line-height:20px">Author</div>
<div class="fld " style="left:117px;top:335px;width:491px;height:20px">Sidney E. Berger</div>
<div class="lbl" style="left:18px;top:358px;height:20px;line-height:20px">Place</div>
<div class="fld " style="left:117px;top:358px;width:179px;height:20px"></div>
<div class="lbl" style="left:300px;top:358px;height:20px;line-height:20px">Publisher</div>
<div class="fld " style="left:399px;top:358px;width:209px;height:20px"></div>
<div class="lbl" style="left:18px;top:382px;height:20px;line-height:20px">Date</div>
<div class="fld " style="left:117px;top:382px;width:179px;height:20px">2014</div>
<div class="lbl" style="left:300px;top:382px;height:20px;line-height:20px">Issue</div>
<div class="fld " style="left:399px;top:382px;width:209px;height:20px"></div>
<div class="lbl" style="left:18px;top:405px;height:20px;line-height:20px">Edition</div>
<div class="fld " style="left:117px;top:405px;width:179px;height:20px"></div>
<div class="lbl" style="left:300px;top:405px;height:20px;line-height:20px">Volume</div>
<div class="fld " style="left:399px;top:405px;width:209px;height:20px"></div>
<div class="lbl" style="left:18px;top:428px;height:20px;line-height:20px">Item Number</div>
<div class="fld " style="left:117px;top:428px;width:179px;height:20px"></div>
<div class="lbl" style="left:300px;top:428px;height:20px;line-height:20px">Ref Num</div>
<div class="fld " style="left:399px;top:428px;width:209px;height:20px"></div>
<div class="lbl" style="left:18px;top:451px;height:20px;line-height:20px">Pages</div>
<div class="fld " style="left:117px;top:451px;width:179px;height:20px"></div>
<div class="lbl" style="left:300px;top:451px;height:20px;line-height:20px">Page Count</div>
<div class="fld " style="left:399px;top:451px;width:209px;height:20px"></div>
<div class="lbl" style="left:18px;top:474px;height:20px;line-height:20px">Call Number</div>
<div class="fld " style="left:117px;top:474px;width:179px;height:20px"></div>
<div class="lbl" style="left:300px;top:474px;height:20px;line-height:20px">EAD Number</div>
<div class="fld " style="left:399px;top:474px;width:209px;height:20px"></div>
<div class="lbl" style="left:18px;top:498px;height:20px;line-height:20px">Citation</div>
<div class="fld " style="left:117px;top:498px;width:491px;height:20px"></div>
<div class="lbl" style="left:18px;top:521px;height:20px;line-height:20px">Location</div>
<div class="fld " style="left:117px;top:521px;width:181px;height:20px"></div>
<div class="lbl" style="left:301px;top:521px;height:20px;line-height:20px">Additional Location</div>
<div class="fld " style="left:400px;top:521px;width:208px;height:20px"></div>
<div class="lbl" style="left:18px;top:544px;height:20px;line-height:20px">Format</div>
<div class="fld" style="left:117px;top:544px;width:179px;height:20px"><i class="cdd"></i></div>
<div class="lbl" style="left:301px;top:542px;height:20px;line-height:20px">For Publication</div>
<div class="chk" style="left:402px;top:546px"></div>
<div class="lbl" style="left:18px;top:567px;height:20px;line-height:20px">Service Level</div>
<div class="fld" style="left:117px;top:567px;width:179px;height:20px"><i class="cdd"></i></div>
<div class="lbl" style="left:301px;top:567px;height:20px;line-height:20px">Shipping Option</div>
<div class="fld" style="left:400px;top:567px;width:208px;height:20px"><i class="cdd"></i></div>
<div class="lbl" style="left:621px;top:196px;height:20px;line-height:20px">Name</div>
<div class="fld ro" style="left:742px;top:196px;width:237px;height:20px">Aeon User</div>
<div class="lbl" style="left:621px;top:219px;height:20px;line-height:20px">Organization</div>
<div class="fld ro" style="left:742px;top:219px;width:237px;height:20px"></div>
<div class="lbl" style="left:621px;top:291px;height:20px;line-height:20px">Phone</div>
<div class="fld ro" style="left:742px;top:291px;width:237px;height:20px">123-456-78910</div>
<div class="lbl" style="left:621px;top:314px;height:20px;line-height:20px">Email</div>
<div class="fld ro" style="left:742px;top:314px;width:237px;height:20px">aeonuser@atlas-sys.com</div>
<div class="lbl" style="left:621px;top:337px;height:20px;line-height:20px">Status</div>
<div class="fld ro" style="left:742px;top:337px;width:237px;height:20px">Faculty</div>
<div class="lbl" style="left:621px;top:360px;height:20px;line-height:20px">Department</div>
<div class="fld ro" style="left:742px;top:360px;width:237px;height:20px">Music</div>
<div class="lbl" style="left:621px;top:383px;height:20px;line-height:20px">Notification</div>
<div class="fld ro" style="left:742px;top:383px;width:237px;height:20px">Email</div>
<div class="lbl" style="left:621px;top:406px;height:20px;line-height:20px">Delivery</div>
<div class="fld ro" style="left:742px;top:406px;width:237px;height:20px"></div>
<div class="lbl" style="left:621px;top:429px;height:20px;line-height:20px">Clearance Status</div>
<div class="fld ro" style="left:742px;top:429px;width:237px;height:20px"><span style="color:#1e8a1e">Cleared</span></div>
<div class="lbl" style="left:621px;top:243px;height:45px;line-height:45px">Address</div>
<div class="fld ro memo" style="left:742px;top:242px;width:237px;height:45px"><div class="mt">5712 Cleveland St.<br>Virginia Beach, VA 23462</div><div class="sb"><i class="up"></i><i class="dn"></i></div></div>
<div class="lbl" style="left:621px;top:454px;height:37px;line-height:37px">Research Topics</div>
<div class="fld ro memo" style="left:742px;top:453px;width:237px;height:37px"><div class="sb"><i class="up"></i><i class="dn"></i></div></div>
<div class="lbl" style="left:621px;top:491px;height:20px;line-height:20px">Research Topics Sharing</div>
<div class="chk" style="left:744px;top:495px"></div>
<div class="lbl" style="left:621px;top:514.5px;height:73px;line-height:73px">Notes</div>
<div class="fld ro notes" style="left:742px;top:513px;width:237px;height:74px"><div class="mt" style="line-height:20px;top:0;left:5px;letter-spacing:.13px">User cleared by staff.<br>User cleared by staff.</div></div>
<div id="grid"><div id="gridin">
 <div class="gh" style="left:0;width:86px;padding-left:3px">Note Date</div>
 <div class="gh" style="left:86px;width:596px;padding-left:4px">Note</div>
 <div class="gh" style="left:682px;width:180px">Username</div>
 <div class="gh" style="left:862px;width:107px;border-right:none">Note Type</div>
</div></div>
<div id="status">In Item Retrieval</div>
<svg style="left:976px;top:703px" width="13" height="13" viewBox="0 0 13 13"><g fill="#fff"><rect x="10" y="2" width="2" height="2"/><rect x="6" y="6" width="2" height="2"/><rect x="10" y="6" width="2" height="2"/><rect x="2" y="10" width="2" height="2"/><rect x="6" y="10" width="2" height="2"/><rect x="10" y="10" width="2" height="2"/></g><g fill="#4a7bc8"><rect x="9" y="1" width="2" height="2"/><rect x="5" y="5" width="2" height="2"/><rect x="9" y="5" width="2" height="2"/><rect x="1" y="9" width="2" height="2"/><rect x="5" y="9" width="2" height="2"/><rect x="9" y="9" width="2" height="2"/></g></svg>
</body></html>
